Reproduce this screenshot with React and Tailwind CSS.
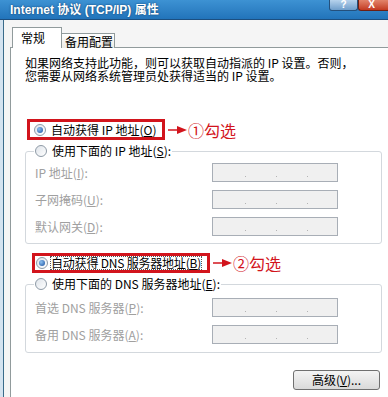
import React from 'react'

function Radio({ checked }) {
  return (
    <span className="flex h-[12px] w-[12px] shrink-0 items-center justify-center rounded-full border border-[#8e9aa6] bg-linear-to-br from-[#dfe4ea] to-white">
      {checked && (
        <span className="h-[6px] w-[6px] rounded-full bg-[radial-gradient(circle_at_35%_35%,#8cc0f0,#1a4f9e)]" />
      )}
    </span>
  )
}

function Arrow() {
  return (
    <svg width="20" height="10" viewBox="0 0 20 10" className="shrink-0">
      <line x1="0" y1="5" x2="11" y2="5" stroke="#d2141c" strokeWidth="1.5" />
      <polygon points="9,1 19,5 9,9" fill="#d2141c" />
    </svg>
  )
}

function IpBox() {
  return (
    <div className="flex h-[19px] w-[126px] items-end gap-[30px] border border-[#a8aeb6] bg-[#f0f0f0] pb-[4px] pl-[32px]">
      <span className="h-[1px] w-[1px] bg-[#b4b4b4]" />
      <span className="h-[1px] w-[1px] bg-[#b4b4b4]" />
      <span className="h-[1px] w-[1px] bg-[#b4b4b4]" />
    </div>
  )
}

function Row({ children }) {
  return (
    <div className="flex items-center">
      <span className="w-[177px] text-[#a0a0a0]">{children}</span>
      <IpBox />
    </div>
  )
}

function Mn({ k }) {
  return (
    <>
      (<span className="underline">{k}</span>)
    </>
  )
}

export default function App() {
  return (
    <div className="flex h-[397px] w-[388px] flex-col overflow-hidden whitespace-nowrap bg-[#f5f5f5] font-['Noto_Sans_CJK_SC',sans-serif] text-[12px] leading-[12px] text-black">
      {/* title bar */}
      <div className="flex h-[20px] shrink-0 items-start border-b border-[#1c4f80] bg-linear-to-b from-[#3d92d3] to-[#2274ba]">
        <div className="flex h-[19px] flex-1 items-center pl-[10px] font-['Liberation_Sans','Noto_Sans_CJK_SC',sans-serif] text-[12px] font-bold text-white [text-shadow:0_0_2px_#0b3a66]">
          Internet 协议 (TCP/IP) 属性
        </div>
        <div className="flex h-[11px] w-[29px] items-center justify-center rounded-b-[3px] border border-t-0 border-[#24507c] bg-linear-to-b from-[#b6d2ec] to-[#6f9ecb] font-['Liberation_Sans',sans-serif] text-[10px] leading-[10px] font-bold text-white">
          ?
        </div>
        <div className="flex h-[11px] w-[30px] items-center justify-center rounded-bl-[3px] border border-t-0 border-r-0 border-[#6d1f12] bg-linear-to-b from-[#e2836a] to-[#c2381f] pr-[4px] font-['Liberation_Sans',sans-serif] text-[10px] leading-[10px] font-bold text-white">
          X
        </div>
      </div>

      {/* body */}
      <div className="flex flex-1">
        <div className="w-[3px] bg-[#d4e3f0]" />
        <div className="w-[1px] bg-[#3a6b8a]" />
        <div className="flex flex-1 flex-col pl-[6px] pt-[7px]">
          {/* tabs */}
          <div className="relative z-10 -mb-px flex items-end pl-[2px]">
            <div className="flex h-[21px] w-[50px] items-center border border-b-0 border-[#919b9c] bg-white pl-[8px] text-[12px]">
              常规
            </div>
            <div className="flex h-[15px] w-[53px] items-center border border-b-0 border-l-0 border-[#919b9c] bg-linear-to-b from-white to-[#ecebe6] pl-[3px] pt-[1px]">
              备用配置
            </div>
          </div>

          {/* panel */}
          <div className="flex flex-1 flex-col border-l border-t border-[#919b9c] bg-white">
            <div className="ml-[14px] mt-[8px] leading-[13px]">
              <div>如果网络支持此功能，则可以获取自动指派的 IP 设置。否则，</div>
              <div>您需要从网络系统管理员处获得适当的 IP 设置。</div>
            </div>

            <div className="ml-[16px] mt-[37px] flex items-center">
              <div className="flex h-[21px] w-[138px] items-center gap-[5px] border-[3px] border-[#d2141c] pl-[4px]">
                <Radio checked />
                <span>
                  自动获得 IP 地址<Mn k="O" />
                </span>
              </div>
              <span className="ml-[3px]">
                <Arrow />
              </span>
              <span className="text-[16px] leading-[16px] text-[#d2141c]">①勾选</span>
            </div>

            <fieldset className="ml-[14px] mt-[4px] w-[357px] rounded-[3px] border border-[#d3d8dd] pb-[7px] pt-[5px]">
              <legend className="ml-[8px] flex h-[14px] items-center gap-[5px] px-[1px]">
                <Radio />
                <span>
                  使用下面的 IP 地址<Mn k="S" />:
                </span>
              </legend>
              <div className="flex flex-col gap-[8px] pl-[9px]">
                <Row>
                  IP 地址<Mn k="I" />:
                </Row>
                <Row>
                  子网掩码<Mn k="U" />:
                </Row>
                <Row>
                  默认网关<Mn k="D" />:
                </Row>
              </div>
            </fieldset>

            <div className="ml-[21px] mt-[9px] flex items-center">
              <div className="flex h-[20px] w-[178px] items-center gap-[2px] border-[3px] border-[#d2141c] pl-[1px]">
                <Radio checked />
                <span className="border border-dotted border-[#555] leading-[12px] tracking-[-0.2px]">
                  自动获得 DNS 服务器地址<Mn k="B" />
                </span>
              </div>
              <span className="ml-[3px]">
                <Arrow />
              </span>
              <span className="text-[16px] leading-[16px] text-[#d2141c]">②勾选</span>
            </div>

            <fieldset className="ml-[14px] mt-[4px] w-[357px] rounded-[3px] border border-[#d3d8dd] pb-[8px] pt-[7px]">
              <legend className="ml-[8px] flex h-[14px] items-center gap-[5px] px-[1px]">
                <Radio />
                <span>
                  使用下面的 DNS 服务器地址<Mn k="E" />:
                </span>
              </legend>
              <div className="flex flex-col gap-[8px] pl-[9px]">
                <Row>
                  首选 DNS 服务器<Mn k="P" />:
                </Row>
                <Row>
                  备用 DNS 服务器<Mn k="A" />:
                </Row>
              </div>
            </fieldset>

            <div className="ml-[282px] mt-[17px] flex h-[20px] w-[87px] items-center justify-center rounded-[3px] border border-[#707070] bg-linear-to-b from-[#f4f4f4] to-[#dadada]">
              高级<Mn k="V" />...
            </div>
          </div>
        </div>
      </div>
    </div>
  )
}
